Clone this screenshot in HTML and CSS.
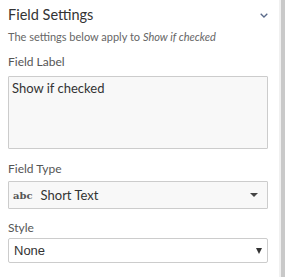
FILE: index.html
```html
<!DOCTYPE html>
<html>
<head>
<meta charset="utf-8">
<link rel="stylesheet" href="styles.css">
</head>
<body>
<div class="page">
  <div class="panel">
    <div class="header">
      <h2 class="title">Field Settings</h2>
      <svg class="chev" width="8" height="5" viewBox="0 0 8 5"><path d="M0.7 0.7 L4 4 L7.3 0.7" fill="none" stroke="#5a6a8a" stroke-width="1.3"/></svg>
    </div>
    <p class="sub">The settings below apply to <em>Show if checked</em></p>

    <label class="lbl lbl-first">Field Label</label>
    <div class="textarea">Show if checked</div>

    <label class="lbl lbl-type">Field Type</label>
    <div class="select">
      <span class="abc">abc</span>
      <span class="sel-text">Short Text</span>
      <span class="caret"></span>
    </div>

    <label class="lbl lbl-style">Style</label>
    <div class="native">
      <span class="native-text">None</span>
      <span class="tri"></span>
    </div>
  </div>
  <div class="scroll"></div>
</div>
</body>
</html>
```
FILE: styles.css
```css
html, body { margin: 0; padding: 0; background: #fff; }
body { font-family: Lato, "Liberation Sans", sans-serif; color: #333; }
.page { display: flex; width: 285px; height: 277px; }
.panel { flex: 1; padding: 0 11px 0 8px; }
.scroll { width: 4px; border-left: 2px solid #f0f0f0; background: #c9c9c9; }
.header { display: flex; align-items: center; justify-content: space-between; height: 28px; padding-top: 1px; }
.title { margin: 0; font-size: 14.5px; font-weight: 400; color: #333; line-height: 18px; }
.chev { margin-right: 0; margin-top: 1px; }
.sub { margin: 1px 0 0; font-size: 11px; color: #666; line-height: 13px; }
.sub em { font-style: italic; }
.lbl { display: block; font-size: 12px; color: #555; line-height: 14px; }
.lbl-first { margin-top: 12px; margin-bottom: 7px; }
.textarea { height: 73px; border: 1px solid #ccc; background: #f8f8f8; border-radius: 1px; font-size: 13px; padding: 3px 3px; box-sizing: border-box; line-height: 16px; color: #333; }
.lbl-type { margin-top: 13px; margin-bottom: 5px; }
.select { display: flex; align-items: center; height: 28px; border: 1px solid #ccc; background: #f8f8f8; box-sizing: border-box; padding: 0 9px 0 4px; border-radius: 1px; }
.abc { font-family: "DejaVu Serif", serif; font-weight: bold; font-size: 10px; color: #555; margin-right: 8px; }
.sel-text { font-size: 13px; color: #333; flex: 1; }
.caret { width: 0; height: 0; border-left: 4px solid transparent; border-right: 4px solid transparent; border-top: 4px solid #444; }
.lbl-style { margin-top: 12px; margin-bottom: 3px; }
.native { display: flex; align-items: center; height: 25px; border: 1px solid #ccc; background: #fff; box-sizing: border-box; padding: 0 5px 0 5px; border-radius: 2px; }
.native-text { flex: 1; font-family: "Liberation Sans", sans-serif; font-size: 13px; color: #333; }
.tri { width: 0; height: 0; border-left: 3px solid transparent; border-right: 3px solid transparent; border-top: 6px solid #333; }
```
